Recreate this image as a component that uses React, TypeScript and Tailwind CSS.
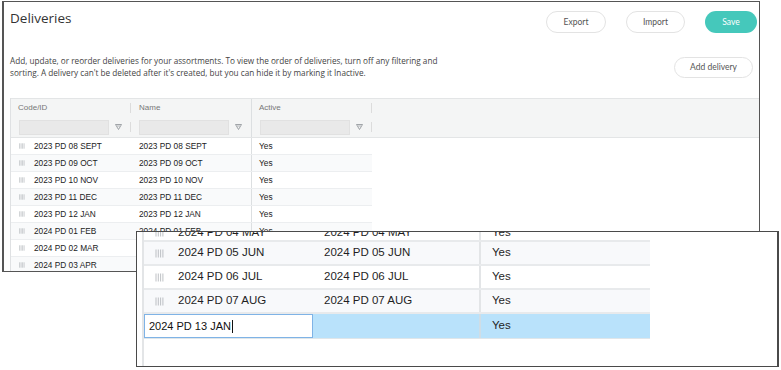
import React from "react";

const Handle = ({ big = false }: { big?: boolean }) =>
  big ? (
    <svg width="9" height="9" viewBox="0 0 9 9" className="shrink-0">
      {[1, 3.3, 5.6, 7.9].map((x) => (
        <line key={x} x1={x} y1="0.5" x2={x} y2="8.5" stroke="#a3a8ad" strokeWidth="0.7" />
      ))}
    </svg>
  ) : (
    <svg width="6" height="6" viewBox="0 0 6 6" className="shrink-0">
      {[0.6, 2.1, 3.6, 5.1].map((x) => (
        <line key={x} x1={x} y1="0.3" x2={x} y2="5.7" stroke="#a3a8ad" strokeWidth="0.55" />
      ))}
    </svg>
  );

const FilterIcon = () => (
  <svg width="7" height="6" viewBox="0 0 7 6" className="shrink-0">
    <path d="M0.5 0.5 H6.5 L3.5 5.5 Z" fill="none" stroke="#8a8f94" strokeWidth="0.8" />
    <line x1="2" y1="2" x2="5" y2="2" stroke="#8a8f94" strokeWidth="0.6" />
  </svg>
);

const rows1 = [
  "2023 PD 08 SEPT",
  "2023 PD 09 OCT",
  "2023 PD 10 NOV",
  "2023 PD 11 DEC",
  "2023 PD 12 JAN",
  "2024 PD 01 FEB",
  "2024 PD 02 MAR",
  "2024 PD 03 APR",
];

const rows2 = ["2024 PD 04 MAY", "2024 PD 05 JUN", "2024 PD 06 JUL", "2024 PD 07 AUG"];

export default function App() {
  return (
    <div className="relative w-[781px] h-[370px] bg-white overflow-hidden">
      {/* Window 1 */}
      <div className="absolute left-[2px] top-[1px] w-[758px] h-[271px] border-l-2 border-t border-r border-b border-[#555] bg-white overflow-hidden flex flex-col">
        <div className="flex justify-between h-[49px] shrink-0">
          <div
            className="pl-[6px] pt-[6px] text-[13.5px] leading-[20px] text-[#333]"
            style={{ fontFamily: "'Open Sans', sans-serif" }}
          >
            Deliveries
          </div>
          <div
            className="flex gap-[20px] pt-[9px] pr-[2px] text-[8.5px] text-[#555]"
            style={{ fontFamily: "Lato, sans-serif" }}
          >
            <div className="w-[60px] h-[22px] rounded-full border border-[#e3e3e3] flex items-center justify-center">Export</div>
            <div className="w-[59px] h-[22px] rounded-full border border-[#e3e3e3] flex items-center justify-center">Import</div>
            <div className="w-[52px] h-[22px] rounded-full bg-[#45c8bb] text-white flex items-center justify-center">Save</div>
          </div>
        </div>
        <div className="flex justify-between h-[47px] shrink-0">
          <div
            className="pl-[6px] pt-[4px] text-[8.2px] leading-[12px] text-[#444] whitespace-nowrap"
            style={{ fontFamily: "'Open Sans', sans-serif" }}
          >
            Add, update, or reorder deliveries for your assortments. To view the order of deliveries, turn off any filtering and
            <br />
            sorting. A delivery can't be deleted after it's created, but you can hide it by marking it Inactive.
          </div>
          <div
            className="mt-[6px] mr-[6px] w-[79px] h-[21px] rounded-full border border-[#e3e3e3] flex items-center justify-center text-[8.5px] text-[#555]"
            style={{ fontFamily: "Lato, sans-serif" }}
          >
            Add delivery
          </div>
        </div>
        {/* Grid */}
        <div
          className="ml-[6px] flex-1 border-l border-[#dfe1e3] flex flex-col text-[#222]"
          style={{ fontFamily: "'Liberation Sans', Arial, sans-serif" }}
        >
          <div className="bg-[#f4f5f5] border-t border-b border-[#e3e5e6]">
            <div className="flex h-[18px] text-[8px] text-[#777]">
              <div className="w-[120px] flex items-center pl-[7px] relative">
                Code/ID
                <div className="absolute right-0 top-[4px] h-[10px] border-r border-[#dcdcdc]" />
              </div>
              <div className="w-[121px] flex items-center pl-[8px] border-r border-[#dcdfe1]">Name</div>
              <div className="w-[120px] flex items-center pl-[7px] relative">
                Active
                <div className="absolute right-0 top-[4px] h-[10px] border-r border-[#dcdcdc]" />
              </div>
            </div>
            <div className="flex h-[20px]">
              {[120, 121, 120].map((w, i) => (
                <div
                  key={i}
                  className={`flex items-center pl-[8px] relative ${i === 1 ? "border-r border-[#dcdfe1]" : ""}`}
                  style={{ width: w }}
                >
                  <div className="w-[90px] h-[15px] bg-[#e9e9e9] border border-[#e1e1e1]" />
                  <div className="ml-[6px]">
                    <FilterIcon />
                  </div>
                  {i !== 1 && <div className="absolute right-0 top-[5px] h-[10px] border-r border-[#dcdcdc]" />}
                </div>
              ))}
            </div>
          </div>
          {rows1.map((r, i) => (
            <div
              key={r}
              className={`flex h-[17px] shrink-0 w-[361px] border-b border-[#eceef0] text-[8.3px] ${i % 2 === 1 ? "bg-[#f9fafb]" : "bg-white"}`}
            >
              <div className="w-[120px] flex items-center pl-[8px] gap-[9px]">
                <Handle />
                <span>{r}</span>
              </div>
              <div className="w-[121px] flex items-center pl-[8px] border-r border-[#dcdfe1]">{r}</div>
              <div className="w-[120px] flex items-center pl-[7px]">Yes</div>
            </div>
          ))}
        </div>
      </div>

      {/* Window 2 (zoomed overlay) */}
      <div className="absolute left-[136px] top-[231px] w-[643px] h-[136px] border border-r-2 border-[#4a4a4a] bg-white overflow-hidden">
        <div
          className="ml-[5px] h-full border-l-2 border-[#e3e5e7] flex flex-col text-[#1f1f1f]"
          style={{ fontFamily: "'Liberation Sans', Arial, sans-serif" }}
        >
          {rows2.map((r, i) => (
            <div
              key={r}
              className={`flex h-[24px] shrink-0 w-[506px] border-b-2 border-[#e8eaec] text-[11.5px] ${i === 0 ? "-mt-[14px] pt-[7px]" : ""} ${i % 2 === 1 ? "bg-[#f8f9fb]" : "bg-white"}`}
            >
              <div className="w-[169px] flex items-center pl-[11px] gap-[14px]">
                <Handle big />
                <span>{r}</span>
              </div>
              <div className="w-[168px] flex items-center pl-[11px] border-r-2 border-[#e3e5e7]">{r}</div>
              <div className="w-[169px] flex items-center pl-[11px]">Yes</div>
            </div>
          ))}
          <div className="flex h-[25px] shrink-0 w-[506px] bg-[#b9e2fb] border-b border-[#dfe6ea] text-[11.5px]">
            <div className="w-[169px] h-full bg-white border-[1.5px] border-[#7fb3e6] flex items-center pl-[4px] text-[11px] text-[#111]">
              2024 PD 13 JAN
              <span className="inline-block w-px h-[13px] bg-[#111] ml-[1px]" />
            </div>
            <div className="w-[168px] border-r-2 border-[#cfdde6]" />
            <div className="w-[169px] flex items-center pl-[11px]">Yes</div>
          </div>
        </div>
      </div>
    </div>
  );
}
